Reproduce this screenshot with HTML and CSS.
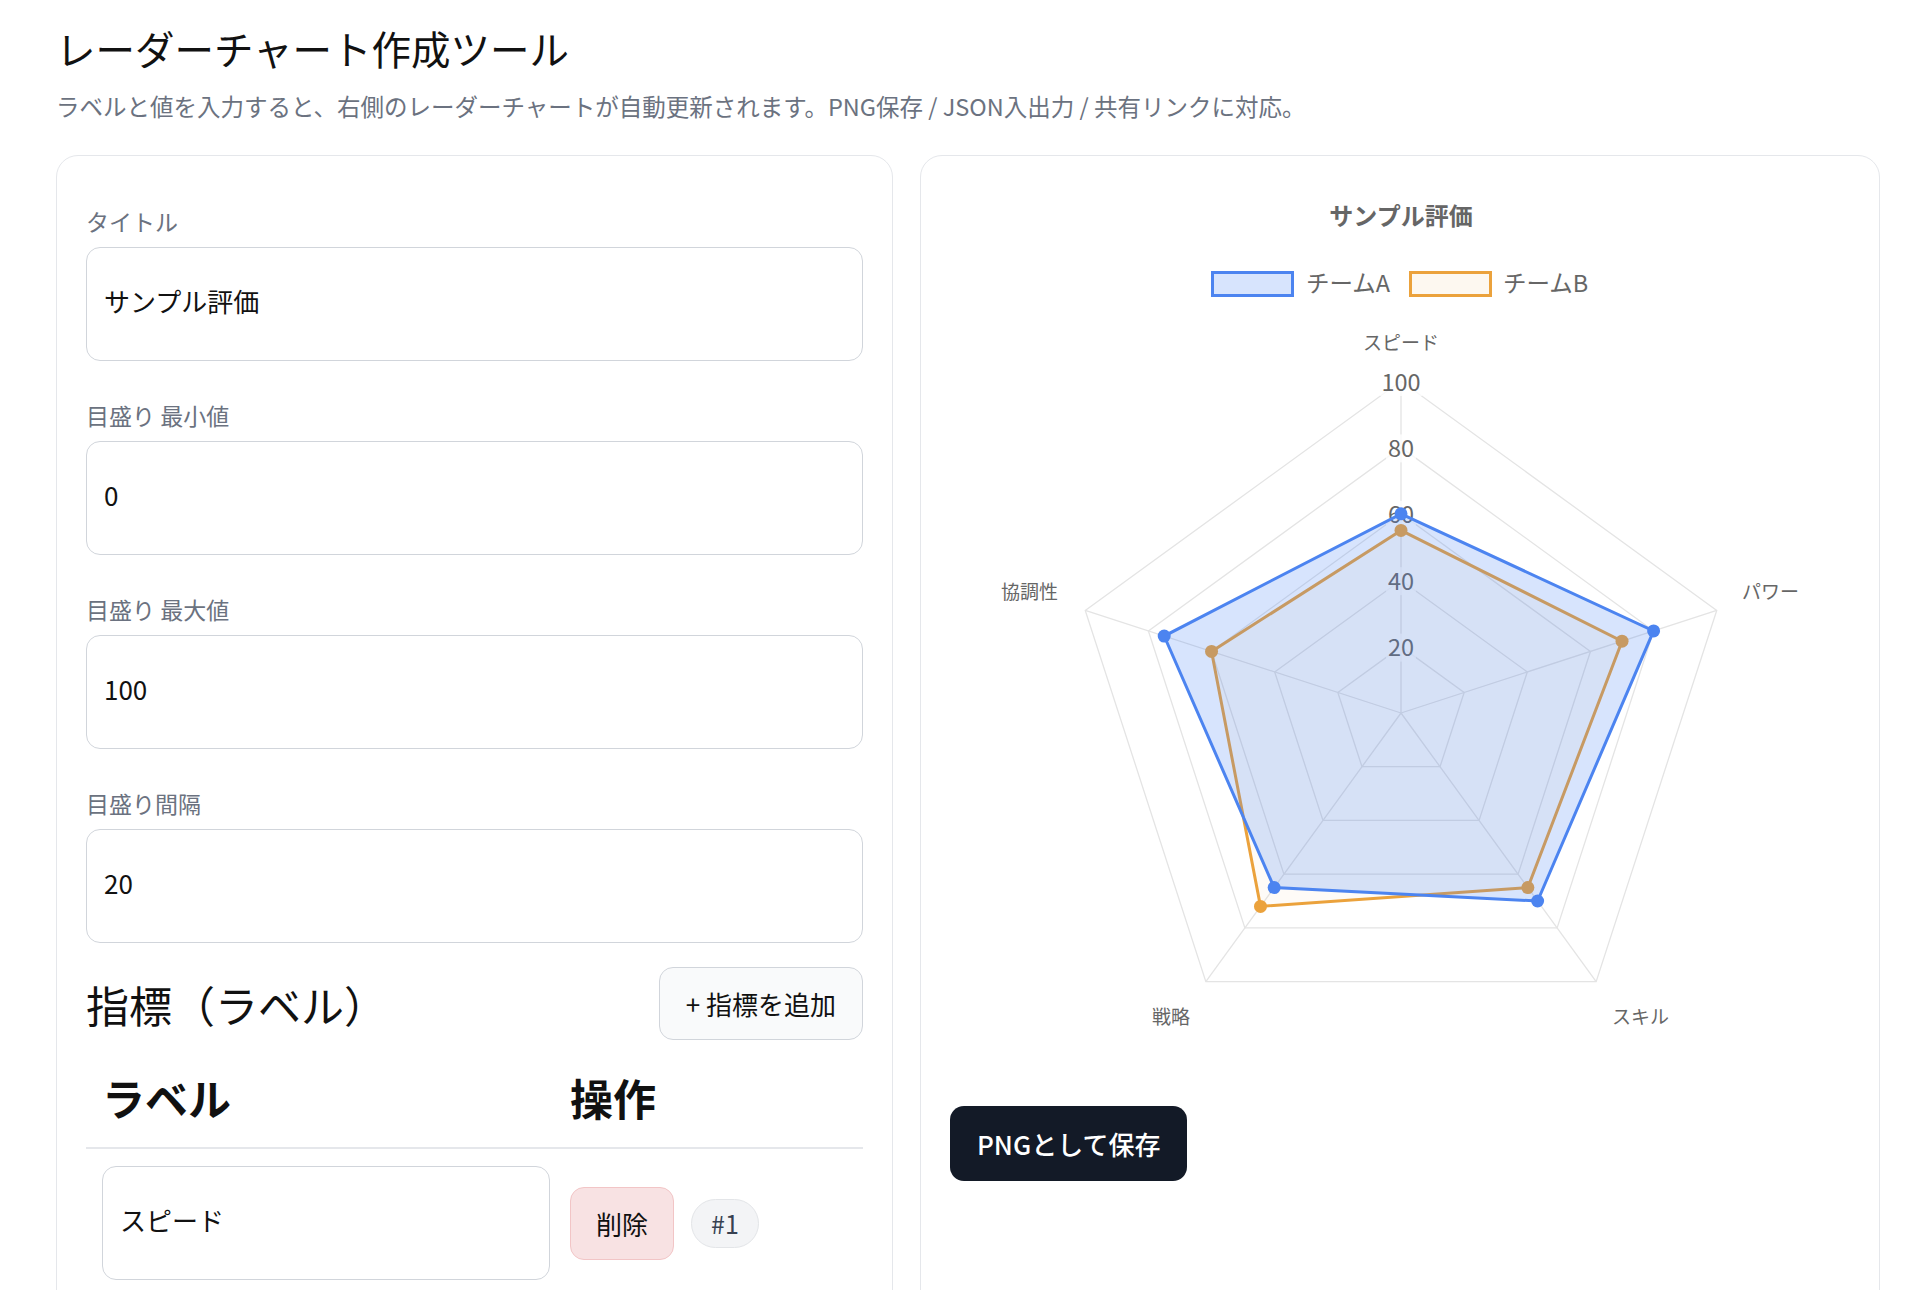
FILE: index.html
```html
<!DOCTYPE html>
<html lang="ja">
<head>
<meta charset="utf-8">
<title>レーダーチャート作成ツール</title>
<link rel="stylesheet" href="styles.css">
</head>
<body>
<div class="page">
  <header class="page-head">
    <h1 class="page-title">レーダーチャート作成ツール</h1>
    <p class="page-lead">ラベルと値を入力すると、右側のレーダーチャートが自動更新されます。PNG保存 / JSON入出力 / 共有リンクに対応。</p>
  </header>

  <div class="layout">
    <section class="card editor">
      <div class="fields">
        <div class="field">
          <label class="field-label" for="f-title">タイトル</label>
          <input class="text-input" id="f-title" type="text" value="サンプル評価">
        </div>
        <div class="field">
          <label class="field-label" for="f-min">目盛り 最小値</label>
          <input class="text-input" id="f-min" type="text" inputmode="numeric" value="0">
        </div>
        <div class="field">
          <label class="field-label" for="f-max">目盛り 最大値</label>
          <input class="text-input" id="f-max" type="text" inputmode="numeric" value="100">
        </div>
        <div class="field">
          <label class="field-label" for="f-step">目盛り間隔</label>
          <input class="text-input" id="f-step" type="text" inputmode="numeric" value="20">
        </div>
      </div>

      <div class="section-head">
        <h2 class="section-title">指標（ラベル）</h2>
        <button class="btn-add" type="button">+ 指標を追加</button>
      </div>

      <table class="label-table">
        <thead>
          <tr><th class="col-label">ラベル</th><th class="col-ops">操作</th></tr>
        </thead>
        <tbody>
          <tr>
            <td class="col-label"><input class="text-input" type="text" value="スピード"></td>
            <td class="col-ops"><div class="ops"><button class="btn-del" type="button">削除</button><span class="badge">#1</span></div></td>
          </tr>
          <tr>
            <td class="col-label"><input class="text-input" type="text" value="パワー"></td>
            <td class="col-ops"><div class="ops"><button class="btn-del" type="button">削除</button><span class="badge">#2</span></div></td>
          </tr>
          <tr>
            <td class="col-label"><input class="text-input" type="text" value="スキル"></td>
            <td class="col-ops"><div class="ops"><button class="btn-del" type="button">削除</button><span class="badge">#3</span></div></td>
          </tr>
          <tr>
            <td class="col-label"><input class="text-input" type="text" value="戦略"></td>
            <td class="col-ops"><div class="ops"><button class="btn-del" type="button">削除</button><span class="badge">#4</span></div></td>
          </tr>
          <tr>
            <td class="col-label"><input class="text-input" type="text" value="協調性"></td>
            <td class="col-ops"><div class="ops"><button class="btn-del" type="button">削除</button><span class="badge">#5</span></div></td>
          </tr>
        </tbody>
      </table>
    </section>

    <section class="card chart-card">
      <svg class="chart" viewBox="0 0 902 895" width="902" height="895">
        <text class="c-title" x="451" y="31" text-anchor="middle" dominant-baseline="central">サンプル評価</text>

        <rect class="lg-a" x="262.5" y="89.5" width="80" height="23"/>
        <text class="c-legend" x="356" y="99" dominant-baseline="central">チームA</text>
        <rect class="lg-b" x="460.5" y="89.5" width="80" height="23"/>
        <text class="c-legend" x="553" y="99" dominant-baseline="central">チームB</text>

        <g class="grid">
          <polygon points="451,198 766.75,427.41 646.15,798.59 255.85,798.59 135.25,427.41"/>
          <polygon points="451,264.4 703.6,447.92 607.12,744.88 294.88,744.88 198.4,447.92"/>
          <polygon points="451,330.8 640.45,468.44 568.09,691.16 333.91,691.16 261.55,468.44"/>
          <polygon points="451,397.2 577.3,488.96 529.06,637.44 372.94,637.44 324.7,488.96"/>
          <polygon points="451,463.6 514.15,509.48 490.03,583.72 411.97,583.72 387.85,509.48"/>
          <line x1="451" y1="530" x2="451" y2="198"/>
          <line x1="451" y1="530" x2="766.75" y2="427.41"/>
          <line x1="451" y1="530" x2="646.15" y2="798.59"/>
          <line x1="451" y1="530" x2="255.85" y2="798.59"/>
          <line x1="451" y1="530" x2="135.25" y2="427.41"/>
        </g>

        <text class="c-point" x="451" y="158" text-anchor="middle" dominant-baseline="central">スピード</text>
        <text class="c-point" x="792" y="407" dominant-baseline="central">パワー</text>
        <text class="c-point" x="662" y="832" dominant-baseline="central">スキル</text>
        <text class="c-point" x="240" y="832" text-anchor="end" dominant-baseline="central">戦略</text>
        <text class="c-point" x="108" y="407" text-anchor="end" dominant-baseline="central">協調性</text>

        <g class="ticks">
          <rect class="tick-bg" x="430" y="185" width="42" height="28"/>
          <text class="c-tick" x="451" y="197.5" text-anchor="middle" dominant-baseline="central">100</text>
          <rect class="tick-bg" x="436" y="251.4" width="30" height="28"/>
          <text class="c-tick" x="451" y="263.9" text-anchor="middle" dominant-baseline="central">80</text>
          <rect class="tick-bg" x="436" y="317.8" width="30" height="28"/>
          <text class="c-tick" x="451" y="330.3" text-anchor="middle" dominant-baseline="central">60</text>
          <rect class="tick-bg" x="436" y="384.2" width="30" height="28"/>
          <text class="c-tick" x="451" y="396.7" text-anchor="middle" dominant-baseline="central">40</text>
          <rect class="tick-bg" x="436" y="450.6" width="30" height="28"/>
          <text class="c-tick" x="451" y="463.1" text-anchor="middle" dominant-baseline="central">20</text>
        </g>

        <g class="set-b">
          <polygon class="area" points="451,347.4 672.03,458.18 577.85,704.59 310.49,723.39 261.55,468.44"/>
          <polygon class="edge" points="451,347.4 672.03,458.18 577.85,704.59 310.49,723.39 261.55,468.44"/>
          <circle cx="451" cy="347.4" r="6.5"/>
          <circle cx="672.03" cy="458.18" r="6.5"/>
          <circle cx="577.85" cy="704.59" r="6.5"/>
          <circle cx="310.49" cy="723.39" r="6.5"/>
          <circle cx="261.55" cy="468.44" r="6.5"/>
        </g>

        <g class="set-a">
          <polygon class="area" points="451,330.8 703.6,447.92 587.6,718.02 324.15,704.59 214.19,453.05"/>
          <polygon class="edge" points="451,330.8 703.6,447.92 587.6,718.02 324.15,704.59 214.19,453.05"/>
          <circle cx="451" cy="330.8" r="6.5"/>
          <circle cx="703.6" cy="447.92" r="6.5"/>
          <circle cx="587.6" cy="718.02" r="6.5"/>
          <circle cx="324.15" cy="704.59" r="6.5"/>
          <circle cx="214.19" cy="453.05" r="6.5"/>
        </g>
      </svg>
      <button class="btn-png" type="button">PNGとして保存</button>
    </section>
  </div>
</div>
</body>
</html>
```

FILE: styles.css
```css
html {
  scrollbar-width: none;
}

body {
  margin: 0;
  background: #ffffff;
  color: #111111;
  font-family: "Noto Sans CJK JP", "Noto Sans", sans-serif;
}

.page {
  width: 1824px;
  margin-left: 56px;
  padding-top: 24px;
}

.page-title {
  margin: 0;
  font-size: 39.5px;
  line-height: 48px;
  font-weight: 400;
  color: #111111;
}

.page-lead {
  margin: 18px 0 0;
  font-size: 23.5px;
  line-height: 32px;
  color: #6b7280;
}

.layout {
  display: grid;
  grid-template-columns: 837px 960px;
  gap: 27px;
  margin-top: 33px;
  align-items: stretch;
}

.card {
  border: 1px solid #e5e7eb;
  border-radius: 22px;
  background: #ffffff;
}

/* ---------- editor ---------- */
.editor {
  padding: 50px 29px 40px;
}

.fields {
  display: flex;
  flex-direction: column;
  gap: 39px;
}

.field-label {
  display: block;
  margin-bottom: 11px;
  font-size: 23px;
  line-height: 30px;
  color: #6b7280;
}

.text-input {
  display: block;
  box-sizing: border-box;
  width: 100%;
  height: 114px;
  padding: 0 17px 8px;
  border: 1px solid #d1d5db;
  border-radius: 14px;
  background: #ffffff;
  font: inherit;
  font-size: 26px;
  color: #111111;
  outline: none;
}

.section-head {
  display: flex;
  justify-content: space-between;
  align-items: center;
  margin-top: 24px;
}

.section-title {
  margin: 0;
  font-size: 43px;
  line-height: 50px;
  font-weight: 400;
  color: #111111;
}

.btn-add {
  box-sizing: border-box;
  height: 73px;
  padding: 0 26px;
  border: 1px solid #d1d5db;
  border-radius: 14px;
  background: #f9fafb;
  font: inherit;
  font-size: 26px;
  color: #111111;
}

.label-table {
  width: 100%;
  margin-top: 13px;
  border-collapse: collapse;
}

.label-table th {
  padding: 18px 16px 24px;
  border-bottom: 2px solid #e5e7eb;
  text-align: left;
  font-size: 43px;
  line-height: 52px;
  font-weight: 700;
  color: #111111;
}

.label-table td {
  padding: 17px 16px;
  vertical-align: middle;
}

.label-table th.col-label,
.label-table td.col-label {
  width: 448px;
}

.label-table th.col-ops,
.label-table td.col-ops {
  padding-left: 4px;
  padding-right: 0;
}

.ops {
  display: flex;
  align-items: center;
  gap: 17px;
}

.btn-del {
  box-sizing: border-box;
  height: 73px;
  padding: 0 25px;
  border: 1px solid #f2c5c6;
  border-radius: 14px;
  background: #f8e2e3;
  font: inherit;
  font-size: 26px;
  color: #111111;
}

.badge {
  display: inline-flex;
  align-items: center;
  box-sizing: border-box;
  height: 49px;
  padding: 0 19px;
  border: 1px solid #e3e5e8;
  border-radius: 999px;
  background: #f3f4f6;
  font-size: 25px;
  color: #374151;
}

/* ---------- chart ---------- */
.chart-card {
  display: flex;
  flex-direction: column;
  align-items: flex-start;
  padding: 27px 29px 29px;
}

.chart {
  display: block;
  width: 902px;
  height: 895px;
}

.c-title {
  font-size: 24px;
  font-weight: 700;
  fill: #666666;
}

.c-legend {
  font-size: 23.5px;
  fill: #666666;
}

.c-point {
  font-size: 19px;
  fill: #666666;
}

.c-tick {
  font-size: 23.5px;
  fill: #666666;
}

.tick-bg {
  fill: rgba(255, 255, 255, 0.75);
}

.grid polygon,
.grid line {
  fill: none;
  stroke: #e4e4e4;
  stroke-width: 1.3;
}

.lg-a {
  fill: rgba(66, 128, 245, 0.21);
  stroke: #4c84f0;
  stroke-width: 3;
}

.lg-b {
  fill: rgba(235, 162, 60, 0.08);
  stroke: #eba23c;
  stroke-width: 3;
}

.set-a .area {
  fill: rgba(66, 128, 245, 0.21);
  stroke: none;
}

.set-a .edge {
  fill: none;
  stroke: #4c84f0;
  stroke-width: 3;
}

.set-a circle {
  fill: #4c84f0;
}

.set-b .area {
  fill: rgba(235, 162, 60, 0.04);
  stroke: none;
}

.set-b .edge {
  fill: none;
  stroke: #eba23c;
  stroke-width: 3;
}

.set-b circle {
  fill: #eba23c;
}

.btn-png {
  box-sizing: border-box;
  margin-top: 28px;
  height: 75px;
  padding: 0 27px;
  border: 0;
  border-radius: 14px;
  background: #131a27;
  font: inherit;
  font-size: 26px;
  font-weight: 500;
  color: #ffffff;
}
```
